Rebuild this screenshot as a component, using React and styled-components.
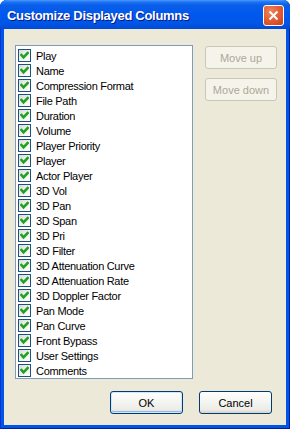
import styled, { createGlobalStyle } from 'styled-components';

const GlobalStyle = createGlobalStyle`
  html, body {
    margin: 0;
    padding: 0;
    background: #ffffff;
  }
  body {
    font-family: "Liberation Sans", Arial, sans-serif;
  }
`;

const columns = [
  'Play',
  'Name',
  'Compression Format',
  'File Path',
  'Duration',
  'Volume',
  'Player Priority',
  'Player',
  'Actor Player',
  '3D Vol',
  '3D Pan',
  '3D Span',
  '3D Pri',
  '3D Filter',
  '3D Attenuation Curve',
  '3D Attenuation Rate',
  '3D Doppler Factor',
  'Pan Mode',
  'Pan Curve',
  'Front Bypass',
  'User Settings',
  'Comments',
];

const Window = styled.div`
  width: 290px;
  height: 429px;
  box-sizing: border-box;
  display: flex;
  flex-direction: column;
  background: #0055e5;
  border-radius: 7px 7px 0 0;
  box-shadow: inset 1px 0 0 #0831d9, inset -1px 0 0 #001ea0, inset 0 -1px 0 #001ea0;
  overflow: hidden;
`;

const TitleBar = styled.div`
  height: 29px;
  flex: 0 0 29px;
  display: flex;
  align-items: center;
  justify-content: space-between;
  padding: 0 6px 0 7px;
  box-sizing: border-box;
  background: linear-gradient(
    to bottom,
    #4a9bff 0px,
    #1f73f5 2px,
    #0a5fe8 5px,
    #0058ee 14px,
    #0055e5 24px,
    #0049d4 29px
  );
`;

const Title = styled.span`
  color: #ffffff;
  font-family: "Liberation Sans", Arial, sans-serif;
  font-weight: bold;
  font-size: 13px;
  letter-spacing: -0.3px;
  text-shadow: 1px 1px 0 #0a1883;
  padding-top: 1px;
`;

const CloseButton = styled.div`
  width: 21px;
  height: 21px;
  box-sizing: border-box;
  border: 1px solid #ffffff;
  border-radius: 3px;
  background: radial-gradient(circle at 35% 30%, #f0845c 0%, #e05a30 55%, #c83e18 100%);
  display: flex;
  align-items: center;
  justify-content: center;
  margin-top: 2px;
`;

const Client = styled.div`
  flex: 1;
  margin: 0 4px 4px 4px;
  background: #ece9d8;
  display: flex;
  flex-direction: column;
  padding: 16px 9px 11px 11px;
  box-sizing: border-box;
`;

const TopRow = styled.div`
  display: flex;
  gap: 12px;
  align-items: flex-start;
`;

const ListBox = styled.div`
  width: 178px;
  flex: 0 0 178px;
  height: 334px;
  box-sizing: border-box;
  border: 1px solid #7f9db9;
  background: #ffffff;
  padding: 2px 0 0 2px;
  display: flex;
  flex-direction: column;
`;

const Row = styled.label`
  height: 15px;
  display: flex;
  align-items: center;
  gap: 5px;
  font-size: 11px;
  letter-spacing: -0.3px;
  color: #000000;
  white-space: nowrap;
`;

const Box = styled.span`
  width: 13px;
  height: 13px;
  box-sizing: border-box;
  border: 1px solid #1c5180;
  background: linear-gradient(135deg, #dcdcd7 0%, #f4f4f0 60%, #ffffff 100%);
  display: flex;
  align-items: center;
  justify-content: center;
  flex: 0 0 13px;
`;

const SideButtons = styled.div`
  display: flex;
  flex-direction: column;
  gap: 9px;
  padding-top: 1px;
`;

const Button = styled.div`
  width: ${(p) => p.$w || 72}px;
  height: 23px;
  box-sizing: border-box;
  border-radius: 3px;
  display: flex;
  align-items: center;
  justify-content: center;
  font-size: 11px;
  color: ${(p) => (p.$disabled ? '#aca899' : '#000000')};
  border: 1px solid ${(p) => (p.$disabled ? '#c9c7ba' : '#003c74')};
  background: ${(p) =>
    p.$disabled
      ? '#f5f4ea'
      : 'linear-gradient(to bottom, #ffffff 0%, #f6f6f3 40%, #ecebe6 85%, #d6d0c5 100%)'};
  box-shadow: ${(p) =>
    p.$default ? 'inset 0 0 0 1px #cee7ff, inset 0 -1px 0 1px #98b8ea' : 'none'};
`;

const BottomRow = styled.div`
  display: flex;
  justify-content: flex-end;
  gap: 16px;
  margin-top: 12px;
  padding-right: 5px;
`;

function Check() {
  return (
    <svg width="9" height="9" viewBox="0 0 9 9">
      <polyline
        points="1.5,4 3.5,6.3 7.6,2"
        fill="none"
        stroke="#21a121"
        strokeWidth="2.6"
        strokeLinecap="square"
      />
    </svg>
  );
}

export default function App() {
  return (
    <>
      <GlobalStyle />
      <Window>
        <TitleBar>
          <Title>Customize Displayed Columns</Title>
          <CloseButton>
            <svg width="11" height="11" viewBox="0 0 11 11">
              <path d="M1.5 1.5 L9.5 9.5 M9.5 1.5 L1.5 9.5" stroke="#ffffff" strokeWidth="2" />
            </svg>
          </CloseButton>
        </TitleBar>
        <Client>
          <TopRow>
            <ListBox>
              {columns.map((c) => (
                <Row key={c}>
                  <Box>
                    <Check />
                  </Box>
                  {c}
                </Row>
              ))}
            </ListBox>
            <SideButtons>
              <Button $disabled>Move up</Button>
              <Button $disabled>Move down</Button>
            </SideButtons>
          </TopRow>
          <BottomRow>
            <Button $w={73} $default>OK</Button>
            <Button $w={73}>Cancel</Button>
          </BottomRow>
        </Client>
      </Window>
    </>
  );
}
